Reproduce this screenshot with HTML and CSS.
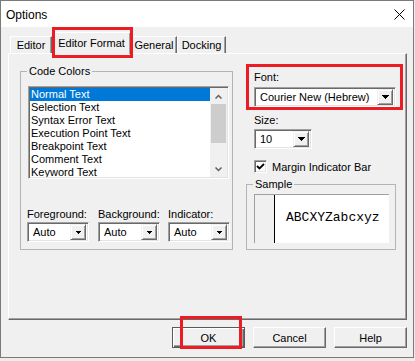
FILE: index.html
```html
<!doctype html>
<html lang="en">
  <head>
    <meta charset="UTF-8" />
    <title>Options</title>
    <link rel="stylesheet" href="styles.css">
  </head>
  <body>
    <div class="window">
      <div class="titlebar">
        <span class="title">Options</span>
        <svg class="close" width="11" height="11" viewBox="0 0 11 11">
          <path d="M0.5 0.5L10.5 10.5M10.5 0.5L0.5 10.5" stroke="#000" stroke-width="1" />
        </svg>
      </div>

      <div class="client">
        <div class="tabs">
          <div class="tab tab-editor">Editor</div>
          <div class="tab tab-format active">Editor Format</div>
          <div class="tab tab-general">General</div>
          <div class="tab tab-docking">Docking</div>
        </div>

        <div class="panel">
          <fieldset class="group code-colors">
            <legend>Code Colors</legend>
            <div class="listbox">
              <ul class="items">
                <li class="selected">Normal Text</li>
                <li>Selection Text</li>
                <li>Syntax Error Text</li>
                <li>Execution Point Text</li>
                <li>Breakpoint Text</li>
                <li>Comment Text</li>
                <li>Keyword Text</li>
              </ul>
              <div class="scrollbar">
                <div class="sb-btn">
                  <svg width="7" height="5" viewBox="0 0 7 5"><polyline points="0.5,4.5 3.5,1.5 6.5,4.5" fill="none" stroke="#606060" stroke-width="1.5" /></svg>
                </div>
                <div class="sb-thumb"></div>
                <div class="sb-track"></div>
                <div class="sb-btn">
                  <svg width="7" height="5" viewBox="0 0 7 5"><polyline points="0.5,0.5 3.5,3.5 6.5,0.5" fill="none" stroke="#606060" stroke-width="1.5" /></svg>
                </div>
              </div>
            </div>

            <div class="pickers">
              <div class="picker">
                <label>Foreground:</label>
                <div class="combo small">
                  <span class="value">Auto</span>
                  <span class="drop"><svg width="5" height="3" viewBox="0 0 5 3"><path d="M0 0h5v1h-1v1h-1v1h-1v-1h-1v-1h-1z" /></svg></span>
                </div>
              </div>
              <div class="picker">
                <label>Background:</label>
                <div class="combo small">
                  <span class="value">Auto</span>
                  <span class="drop"><svg width="5" height="3" viewBox="0 0 5 3"><path d="M0 0h5v1h-1v1h-1v1h-1v-1h-1v-1h-1z" /></svg></span>
                </div>
              </div>
              <div class="picker">
                <label>Indicator:</label>
                <div class="combo small">
                  <span class="value">Auto</span>
                  <span class="drop"><svg width="5" height="3" viewBox="0 0 5 3"><path d="M0 0h5v1h-1v1h-1v1h-1v-1h-1v-1h-1z" /></svg></span>
                </div>
              </div>
            </div>
          </fieldset>

          <div class="side">
            <label class="side-label">Font:</label>
            <div class="combo font-combo">
              <span class="value">Courier New (Hebrew)</span>
              <span class="drop"><svg width="7" height="4" viewBox="0 0 7 4"><path d="M0 0h7v1h-1v1h-1v1h-1v1h-1v-1h-1v-1h-1v-1h-1z" /></svg></span>
            </div>

            <label class="side-label size-label">Size:</label>
            <div class="combo size-combo">
              <span class="value">10</span>
              <span class="drop"><svg width="7" height="4" viewBox="0 0 7 4"><path d="M0 0h7v1h-1v1h-1v1h-1v1h-1v-1h-1v-1h-1v-1h-1z" /></svg></span>
            </div>

            <div class="check">
              <span class="box">
                <svg width="9" height="9" viewBox="0 0 9 9"><polyline points="1,4 3.5,6.5 8,2" fill="none" stroke="#000" stroke-width="1.8" /></svg>
              </span>
              <span>Margin Indicator Bar</span>
            </div>

            <fieldset class="group sample">
              <legend>Sample</legend>
              <div class="sample-box">
                <div class="gutter"></div>
                <div class="sample-text">ABCXYZabcxyz</div>
              </div>
            </fieldset>
          </div>
        </div>

        <div class="buttons">
          <button class="btn default">OK</button>
          <button class="btn">Cancel</button>
          <button class="btn">Help</button>
        </div>
      </div>

      <!-- red highlight marks -->
      <div class="mark mark-tab"></div>
      <div class="mark mark-font"></div>
      <div class="mark mark-ok"></div>
    </div>
  </body>
</html>
```

FILE: styles.css
```css
* {
  box-sizing: border-box;
}
body {
  margin: 0;
  padding: 0;
  background: #ececec;
  font-family: "Liberation Sans", Arial, sans-serif;
  font-size: 11px;
  color: #000;
}
.window {
  position: relative;
  width: 414px;
  height: 358px;
  border: 1px solid #7a7a7a;
  background: #f0f0f0;
}
.titlebar {
  height: 26px;
  background: #fff;
  display: flex;
  align-items: center;
  justify-content: space-between;
  padding: 0 8px 0 5px;
}
.title {
  font-size: 12px;
  margin-top: 1px;
}
.close {
  display: block;
  margin-top: 1px;
}
.client {
  padding: 5px 0 0 7px;
}

/* tabs */
.tabs {
  display: flex;
  align-items: flex-end;
  height: 21px;
  padding-left: 2px;
}
.tab {
  height: 17px;
  line-height: 16px;
  text-align: center;
  background: #f0f0f0;
  border-top: 1px solid #fff;
  border-left: 1px solid #fff;
  border-right: 1px solid #696969;
  box-shadow: inset -1px 0 #a0a0a0;
}
.tab-editor {
  width: 42px;
}
.tab-format {
  width: 79px;
}
.tab-general {
  width: 46px;
}
.tab-docking {
  width: 49px;
}
.tab.active {
  position: relative;
  z-index: 1;
  height: 22px;
  margin-bottom: -1px;
  line-height: 20px;
}

/* panel */
.panel {
  width: 399px;
  height: 267px;
  display: flex;
  align-items: flex-start;
  padding: 11px 0 0 11px;
  border: 1px solid;
  border-color: #fff #696969 #696969 #fff;
  box-shadow: inset -1px -1px #a0a0a0;
}
.group {
  margin: 0;
  border: 1px solid #b4b4b4;
  padding: 0 0 0 6px;
}
.group legend {
  padding: 0 2px;
  line-height: 13px;
}
.code-colors {
  width: 213px;
  height: 185px;
}

/* listbox */
.listbox {
  display: flex;
  width: 201px;
  height: 93px;
  margin: 8px 0 0 1px;
  background: #fff;
  border: 1px solid;
  border-color: #a0a0a0 #fff #fff #a0a0a0;
  box-shadow: inset 1px 1px #696969, inset -1px -1px #e3e3e3;
  padding: 1px;
  overflow: hidden;
}
.items {
  flex: 1;
  list-style: none;
  margin: 0;
  padding: 0;
  overflow: hidden;
}
.items li {
  height: 13px;
  line-height: 13px;
  padding-left: 1px;
  white-space: nowrap;
}
.items li.selected {
  background: #0078d7;
  color: #fff;
}
.scrollbar {
  width: 17px;
  display: flex;
  flex-direction: column;
  background: #f0f0f0;
}
.sb-btn {
  height: 16px;
  display: flex;
  align-items: center;
  justify-content: center;
}
.sb-thumb {
  height: 39px;
  margin: 0 1px 0 1px;
  background: #cdcdcd;
}
.sb-track {
  flex: 1;
}
.sb-btn svg {
  display: block;
}

/* colour pickers */
.pickers {
  display: grid;
  grid-template-columns: 71px 70px 62px;
  margin-top: 29px;
}
.picker label {
  display: block;
  line-height: 13px;
  margin-bottom: 1px;
  white-space: nowrap;
}

/* combo boxes */
.combo {
  display: flex;
  height: 20px;
  background: #fff;
  border: 1px solid;
  border-color: #a0a0a0 #fff #fff #a0a0a0;
  box-shadow: inset 1px 1px #696969, inset -1px -1px #e3e3e3;
  padding: 1px 2px 1px 1px;
}
.combo.small {
  width: 62px;
}
.combo .value {
  flex: 1;
  line-height: 16px;
  padding-left: 4px;
  white-space: nowrap;
  overflow: hidden;
}
.combo .drop {
  width: 16px;
  display: flex;
  align-items: center;
  justify-content: center;
  background: #f0f0f0;
  border: 1px solid;
  border-color: #f0f0f0 #696969 #696969 #f0f0f0;
  box-shadow: inset 1px 1px #fff, inset -1px -1px #a0a0a0;
}
.combo .drop svg {
  display: block;
}

/* right column */
.side {
  width: 157px;
  margin-left: 13px;
  padding-top: 6px;
}
.side-label {
  display: block;
  padding-left: 8px;
  line-height: 13px;
  margin-bottom: 3px;
}
.size-label {
  margin-top: 7px;
  margin-bottom: 2px;
}
.font-combo {
  width: 142px;
  margin-left: 8px;
}
.size-combo {
  width: 58px;
  margin-left: 8px;
}
.check {
  display: flex;
  align-items: center;
  gap: 5px;
  height: 13px;
  margin: 11px 0 0 8px;
}
.check .box {
  width: 13px;
  height: 13px;
  display: flex;
  align-items: center;
  justify-content: center;
  background: #fff;
  border: 1px solid;
  border-color: #a0a0a0 #fff #fff #a0a0a0;
  box-shadow: inset 1px 1px #696969, inset -1px -1px #e3e3e3;
}
.check .box svg {
  display: block;
}
.sample {
  width: 150px;
  height: 72px;
  margin-top: 5px;
}
.sample-box {
  display: flex;
  width: 135px;
  height: 49px;
  margin: 3px 0 0 1px;
  background: #fff;
  border-top: 1px solid #a0a0a0;
  border-left: 1px solid #a0a0a0;
}
.gutter {
  width: 20px;
  background: #f0f0f0;
  border-right: 1px solid #000;
}
.sample-text {
  padding: 15px 0 0 11px;
  font-family: "Liberation Mono", "Courier New", monospace;
  font-size: 13px;
  line-height: 16px;
}

/* dialog buttons */
.buttons {
  display: flex;
  justify-content: flex-end;
  gap: 8px;
  width: 399px;
  margin-top: 7px;
}
.btn {
  width: 73px;
  height: 21px;
  padding: 0;
  font-family: "Liberation Sans", Arial, sans-serif;
  font-size: 11px;
  color: #000;
  background: #f0f0f0;
  border: 1px solid;
  border-color: #fff #696969 #696969 #fff;
  box-shadow: inset -1px -1px #a0a0a0;
}
.btn.default {
  border-color: #5a5a5a;
  box-shadow: inset 1px 1px #fff, inset -1px -1px #696969, inset -2px -2px #a0a0a0;
}

/* red annotation boxes */
.mark {
  position: absolute;
  border: 3px solid #ec1c24;
  z-index: 2;
}
.mark-tab {
  left: 51px;
  top: 26px;
  width: 81px;
  height: 31px;
}
.mark-font {
  left: 245px;
  top: 63px;
  width: 157px;
  height: 46px;
}
.mark-ok {
  left: 179px;
  top: 315px;
  width: 62px;
  height: 33px;
}
```
